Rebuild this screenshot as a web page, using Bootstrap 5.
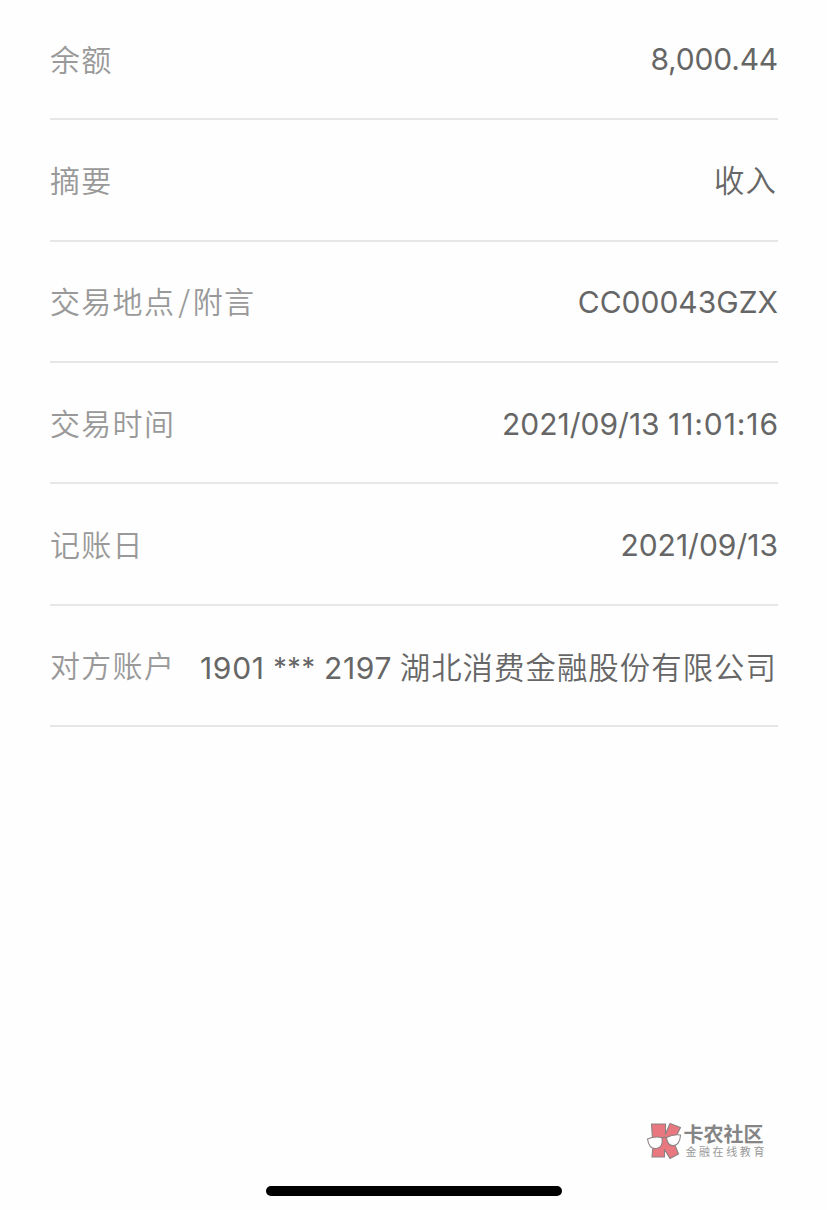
<!DOCTYPE html>
<html lang="zh-CN">
<head>
<meta charset="utf-8">
<meta name="viewport" content="width=device-width, initial-scale=1">
<title>交易详情</title>
<link href="https://cdn.jsdelivr.net/npm/bootstrap@5.3.0/dist/css/bootstrap.min.css" rel="stylesheet">
<style>
  body { font-family: Inter, "Noto Sans CJK SC", sans-serif; background: #fefefe; }
  .detail-list { padding: 0 49px 0 50px; }
  .detail-row { height: 121.35px; padding-top: 2px; border-bottom: 2px solid #e7e7e7; line-height: 40px; white-space: nowrap; }
  .detail-row:first-child { height: 120.45px; padding-top: 0; }
  .detail-label, .detail-value { font-size: 30px; }
  .detail-label { color: #999; letter-spacing: 1.3px; font-family: "Noto Sans CJK SC", sans-serif; margin-top: -4px; }
  .detail-row:first-child .detail-label { margin-top: -3px; }
  .detail-value { color: #666; }
  .han { font-size: 30.4px; letter-spacing: 1.05px; margin-left: -1px; margin-right: 1px; }
  .account { padding-top: 3px; }
  .slash { margin: 0 1.5px 0 3px; }
  .amount { letter-spacing: -.2px; }
  .clock { letter-spacing: .9px; margin-right: -.9px; }
  .digits { letter-spacing: .7px; }
  .stars { font-size: 27px; letter-spacing: .6px; line-height: 1; vertical-align: 2px; }
  .detail-label, .han { font-weight: 350; }
  .brand { padding-right: 60px; margin-bottom: 26px; color: #858585; }
  .brand-name { font-size: 20px; line-height: 22px; font-weight: 700; padding-top: 2px; }
  .brand-sub { font-size: 11px; line-height: 12px; letter-spacing: 2.6px; color: #999; margin-left: 2px; }
  .home-bar { width: 296px; height: 10px; background: #000; margin-bottom: 14px; }
</style>
</head>
<body>
<main class="d-flex flex-column vh-100 overflow-hidden">
  <div class="detail-list">
    <div class="detail-row d-flex justify-content-between align-items-center"><span class="detail-label">余额</span><span class="detail-value amount">8,000.44</span></div>
    <div class="detail-row d-flex justify-content-between align-items-center"><span class="detail-label">摘要</span><span class="detail-value"><span class="han">收入</span></span></div>
    <div class="detail-row d-flex justify-content-between align-items-center"><span class="detail-label">交易地点<span class="slash">/</span>附言</span><span class="detail-value">CC00043GZX</span></div>
    <div class="detail-row d-flex justify-content-between align-items-center"><span class="detail-label">交易时间</span><span class="detail-value">2021/09/13 <span class="clock">11:01:16</span></span></div>
    <div class="detail-row d-flex justify-content-between align-items-center"><span class="detail-label">记账日</span><span class="detail-value">2021/09/13</span></div>
    <div class="detail-row d-flex justify-content-between align-items-center"><span class="detail-label">对方账户</span><span class="detail-value account"><span class="digits">1901</span> <span class="stars">***</span> <span class="digits">2197</span> <span class="han">湖北消费金融股份有限公司</span></span></div>
  </div>
  <footer class="mt-auto">
    <div class="brand d-flex justify-content-end align-items-start">
      <svg width="37" height="38" viewBox="0 0 37 38" fill="none" stroke="#8c8282" stroke-width="1.1" stroke-linejoin="round">
        <path fill="#e97780" d="M5.500 2H19.500V12L24 1.500L34.500 5.500L27.500 19.500L32.500 32L24 36.500L18.500 27.500V35H6L7 24Z"/>
        <path fill="#fefefe" d="M1.500 17Q8 14 16 15.500Q17.500 25.500 10.500 26.500Q3 27.500 1.500 17ZM20.500 15.500Q27 12 34.500 13Q34 22.500 28 23.500Q21.500 24.500 20.500 15.500Z"/>
        <path d="M16 16.500Q18.500 14 20.500 16"/>
      </svg>
      <div><div class="brand-name">卡农社区</div><div class="brand-sub">金融在线教育</div></div>
    </div>
    <div class="home-bar rounded-pill mx-auto"></div>
  </footer>
</main>
<script src="https://cdn.jsdelivr.net/npm/bootstrap@5.3.0/dist/js/bootstrap.bundle.min.js"></script>
</body>
</html>
